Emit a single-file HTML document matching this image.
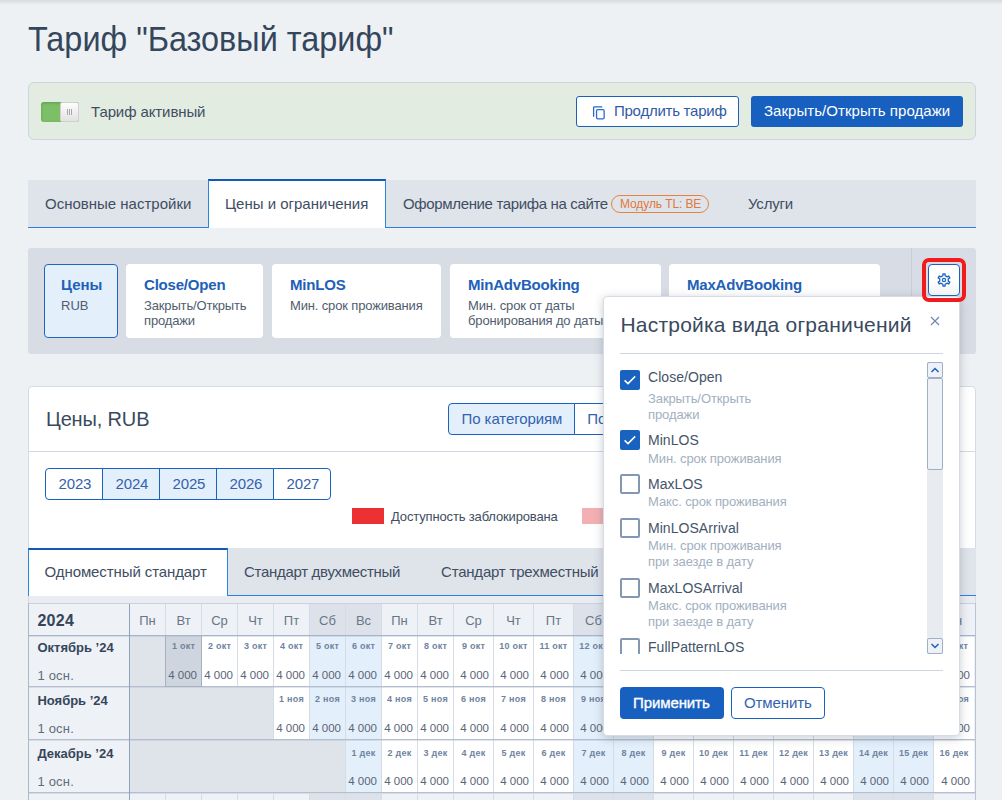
<!DOCTYPE html><html><head><meta charset="utf-8"><style>
*{box-sizing:border-box;margin:0;padding:0}
html,body{width:1002px;height:800px;overflow:hidden}
body{background:#eef1f4;font-family:"Liberation Sans",sans-serif;color:#3d4b5c;position:relative}
.a{position:absolute;white-space:nowrap}
svg{display:block}
</style></head><body><div class="a " style="left:0;top:0;width:1002px;height:5px;background:linear-gradient(#d8dbde,rgba(238,241,244,0))"></div>
<div class="a" style="left:28px;top:17.47px;font-size:35px;line-height:44px;color:#34465c;font-weight:normal;letter-spacing:0px;transform:scaleX(0.926);transform-origin:0 0">Тариф "Базовый тариф"</div>
<div class="a " style="left:28px;top:82px;width:948px;height:58px;background:#e3ece0;border:1px solid #ccd4e2;border-radius:6px"></div>
<div class="a " style="left:41px;top:102px;width:38px;height:20px;border-radius:3px;background:#7dbf66;box-shadow:inset 0 1px 3px rgba(40,90,30,.35)"></div>
<div class="a " style="left:60px;top:102px;width:19px;height:20px;border-radius:2px;background:linear-gradient(#fdfdfd,#e2e2e2);border:1px solid #d0d0d0"><div style="position:absolute;left:6px;top:6px;width:1px;height:6px;background:#a9a9a9;box-shadow:2px 0 0 #a9a9a9,4px 0 0 #a9a9a9"></div></div>
<div class="a" style="left:91px;top:102.10px;font-size:15px;line-height:19px;color:#404e62;font-weight:normal;letter-spacing:-0.1px;">Тариф активный</div>
<div class="a " style="left:576px;top:96px;width:163px;height:31px;border:1px solid #1a5fb8;border-radius:3px;background:#fff"></div>
<div class="a " style="left:592px;top:105px;width:14px;height:16px"><svg width="14" height="16" viewBox="0 0 14 16"><path d="M1.6 11.3V2.6Q1.6 1.9 2.3 1.9H9.8" fill="none" stroke="#2a6cc6" stroke-width="1.3" stroke-linecap="round"/><rect x="4.55" y="4.65" width="7.6" height="9.2" rx="1.3" fill="none" stroke="#2a6cc6" stroke-width="1.3"/></svg></div>
<div class="a" style="left:614px;top:101.30px;font-size:15px;line-height:19px;color:#3159a6;font-weight:normal;letter-spacing:-0.25px;">Продлить тариф</div>
<div class="a " style="left:751px;top:96px;width:212px;height:31px;border-radius:3px;background:#1760bf"></div>
<div class="a" style="left:764px;top:101.30px;font-size:15px;line-height:19px;color:#fff;font-weight:normal;letter-spacing:0.05px;">Закрыть/Открыть продажи</div>
<div class="a " style="left:28px;top:180px;width:948px;height:48px;background:#dfe3ea;border-bottom:1px solid #2a80dc"></div>
<div class="a " style="left:208px;top:179px;width:178px;height:49px;background:#fff;border:1px solid #2a85e0;border-top:2px solid #1259b8;border-bottom:none"></div>
<div class="a" style="left:45px;top:194.30px;font-size:15px;line-height:19px;color:#404e62;font-weight:normal;letter-spacing:0px;">Основные настройки</div>
<div class="a" style="left:225px;top:194.30px;font-size:15px;line-height:19px;color:#404e62;font-weight:normal;letter-spacing:0px;">Цены и ограничения</div>
<div class="a" style="left:403px;top:194.30px;font-size:15px;line-height:19px;color:#404e62;font-weight:normal;letter-spacing:-0.35px;">Оформление тарифа на сайте</div>
<div class="a " style="left:611px;top:195px;width:98px;height:18px;border:1px solid #e2843f;border-radius:9px"></div>
<div class="a" style="left:620px;top:196.94px;font-size:12px;line-height:15px;color:#e2783a;font-weight:normal;letter-spacing:-0.1px;">Модуль TL: BE</div>
<div class="a" style="left:748px;top:194.30px;font-size:15px;line-height:19px;color:#404e62;font-weight:normal;letter-spacing:-0.2px;">Услуги</div>
<div class="a " style="left:28px;top:248px;width:948px;height:106px;background:#d8dde5;border-radius:3px"></div>
<div class="a " style="left:44px;top:264px;width:74px;height:74px;background:#e3f0fc;border:1px solid #2165c0;border-radius:4px"></div>
<div class="a" style="left:61px;top:275.30px;font-size:15px;line-height:19px;color:#2160b8;font-weight:bold;letter-spacing:0px;">Цены</div>
<div class="a" style="left:61px;top:297.80px;font-size:13px;line-height:16px;color:#4f5d6e;font-weight:normal;letter-spacing:0px;">RUB</div>
<div class="a " style="left:126px;top:264px;width:137px;height:74px;background:#fff;border-radius:4px"></div>
<div class="a" style="left:144px;top:275.30px;font-size:15px;line-height:19px;color:#2160b8;font-weight:bold;letter-spacing:-0.2px;">Close/Open</div>
<div class="a" style="left:144px;top:297.80px;font-size:13px;line-height:16px;color:#4f5d6e;font-weight:normal;letter-spacing:-0.15px;">Закрыть/Открыть</div>
<div class="a" style="left:144px;top:313.30px;font-size:13px;line-height:16px;color:#4f5d6e;font-weight:normal;letter-spacing:-0.15px;">продажи</div>
<div class="a " style="left:272px;top:264px;width:169px;height:74px;background:#fff;border-radius:4px"></div>
<div class="a" style="left:290px;top:275.30px;font-size:15px;line-height:19px;color:#2160b8;font-weight:bold;letter-spacing:-0.2px;">MinLOS</div>
<div class="a" style="left:290px;top:297.80px;font-size:13px;line-height:16px;color:#4f5d6e;font-weight:normal;letter-spacing:-0.15px;">Мин. срок проживания</div>
<div class="a " style="left:450px;top:264px;width:211px;height:74px;background:#fff;border-radius:4px"></div>
<div class="a" style="left:468px;top:275.30px;font-size:15px;line-height:19px;color:#2160b8;font-weight:bold;letter-spacing:-0.2px;">MinAdvBooking</div>
<div class="a" style="left:468px;top:297.80px;font-size:13px;line-height:16px;color:#4f5d6e;font-weight:normal;letter-spacing:-0.15px;">Мин. срок от даты</div>
<div class="a" style="left:468px;top:313.30px;font-size:13px;line-height:16px;color:#4f5d6e;font-weight:normal;letter-spacing:-0.15px;">бронирования до даты</div>
<div class="a " style="left:669px;top:264px;width:211px;height:74px;background:#fff;border-radius:4px"></div>
<div class="a" style="left:687px;top:275.30px;font-size:15px;line-height:19px;color:#2160b8;font-weight:bold;letter-spacing:-0.2px;">MaxAdvBooking</div>
<div class="a" style="left:687px;top:297.80px;font-size:13px;line-height:16px;color:#4f5d6e;font-weight:normal;letter-spacing:-0.15px;">Макс. срок от даты</div>
<div class="a" style="left:687px;top:313.30px;font-size:13px;line-height:16px;color:#4f5d6e;font-weight:normal;letter-spacing:-0.15px;">бронирования до даты</div>
<div class="a " style="left:911px;top:248px;width:1px;height:106px;background:#c8ced8"></div>
<div class="a " style="left:28px;top:386px;width:948px;height:420px;background:#fff;border:1px solid #d5dbe3;border-radius:4px"></div>
<div class="a" style="left:46px;top:406.87px;font-size:20px;line-height:25px;color:#3a4a5d;font-weight:normal;letter-spacing:-0.15px;">Цены, RUB</div>
<div class="a " style="left:29px;top:451px;width:946px;height:1px;background:#d2d9e2"></div>
<div class="a " style="left:448px;top:403px;width:127px;height:32px;border:1px solid #1a62c0;border-radius:4px 0 0 4px;background:#e3f0fc"></div>
<div class="a" style="left:461.6px;top:409.30px;font-size:15px;line-height:19px;color:#3462ae;font-weight:normal;letter-spacing:-0.1px;">По категориям</div>
<div class="a " style="left:574px;top:403px;width:140px;height:32px;border:1px solid #1a62c0;border-radius:0 4px 4px 0;background:#fff"></div>
<div class="a" style="left:587.3px;top:409.30px;font-size:15px;line-height:19px;color:#3462ae;font-weight:normal;letter-spacing:-0.1px;">По тарифам</div>
<div class="a " style="left:45px;top:468px;width:58px;height:32px;border:1px solid #1a62c0;background:#fff;border-radius:4px 0 0 4px;"></div>
<div class="a" style="left:58.6px;top:474.30px;font-size:15px;line-height:19px;color:#3462ae;font-weight:normal;letter-spacing:-0.2px;">2023</div>
<div class="a " style="left:102px;top:468px;width:58px;height:32px;border:1px solid #1a62c0;background:#e3f0fc;"></div>
<div class="a" style="left:115.6px;top:474.30px;font-size:15px;line-height:19px;color:#3462ae;font-weight:normal;letter-spacing:-0.2px;">2024</div>
<div class="a " style="left:159px;top:468px;width:58px;height:32px;border:1px solid #1a62c0;background:#e3f0fc;"></div>
<div class="a" style="left:172.6px;top:474.30px;font-size:15px;line-height:19px;color:#3462ae;font-weight:normal;letter-spacing:-0.2px;">2025</div>
<div class="a " style="left:216px;top:468px;width:58px;height:32px;border:1px solid #1a62c0;background:#e3f0fc;"></div>
<div class="a" style="left:229.6px;top:474.30px;font-size:15px;line-height:19px;color:#3462ae;font-weight:normal;letter-spacing:-0.2px;">2026</div>
<div class="a " style="left:273px;top:468px;width:58px;height:32px;border:1px solid #1a62c0;background:#fff;border-radius:0 4px 4px 0;"></div>
<div class="a" style="left:286.6px;top:474.30px;font-size:15px;line-height:19px;color:#3462ae;font-weight:normal;letter-spacing:-0.2px;">2027</div>
<div class="a " style="left:352px;top:508px;width:32px;height:16px;background:#eb3134"></div>
<div class="a" style="left:391px;top:508.50px;font-size:13px;line-height:16px;color:#404e62;font-weight:normal;letter-spacing:-0.15px;">Доступность заблокирована</div>
<div class="a " style="left:582px;top:508px;width:32px;height:16px;background:#f3b0b2"></div>
<div class="a " style="left:28px;top:548px;width:948px;height:48px;background:#dfe3ea;border-bottom:1px solid #2a80dc"></div>
<div class="a " style="left:28px;top:548px;width:200px;height:48px;background:#fff;border:1px solid #2a85e0;border-top:2px solid #1259b8;border-bottom:none"></div>
<div class="a" style="left:44.6px;top:562.30px;font-size:15px;line-height:19px;color:#404e62;font-weight:normal;letter-spacing:-0.1px;">Одноместный стандарт</div>
<div class="a" style="left:244px;top:562.30px;font-size:15px;line-height:19px;color:#404e62;font-weight:normal;letter-spacing:-0.3px;">Стандарт двухместный</div>
<div class="a" style="left:441px;top:562.30px;font-size:15px;line-height:19px;color:#404e62;font-weight:normal;letter-spacing:-0.2px;">Стандарт трехместный</div>
<div class="a " style="left:29px;top:596px;width:946px;height:7px;background:#e9edf1"></div>
<div class="a " style="left:28px;top:603px;width:948px;height:200px;background:#eef1f5"></div>
<div class="a " style="left:28px;top:603px;width:948px;height:1px;background:#c8d1dd"></div>
<div class="a " style="left:28px;top:603px;width:1px;height:200px;background:#a9b8cc"></div>
<div class="a " style="left:310px;top:604px;width:35px;height:31px;background:#dde2ea"></div>
<div class="a " style="left:346px;top:604px;width:35px;height:31px;background:#dde2ea"></div>
<div class="a " style="left:574px;top:604px;width:39px;height:31px;background:#dde2ea"></div>
<div class="a " style="left:614px;top:604px;width:39px;height:31px;background:#dde2ea"></div>
<div class="a " style="left:854px;top:604px;width:39px;height:31px;background:#dde2ea"></div>
<div class="a " style="left:894px;top:604px;width:39px;height:31px;background:#dde2ea"></div>
<div class="a" style="left:37.4px;top:611.46px;font-size:16px;line-height:20px;color:#35465b;font-weight:bold;letter-spacing:0.3px;">2024</div>
<div class="a" style="left:130px;top:612.50px;width:35px;text-align:center;font-size:13px;line-height:16px;color:#687687">Пн</div>
<div class="a" style="left:166px;top:612.50px;width:35px;text-align:center;font-size:13px;line-height:16px;color:#687687">Вт</div>
<div class="a" style="left:202px;top:612.50px;width:35px;text-align:center;font-size:13px;line-height:16px;color:#687687">Ср</div>
<div class="a" style="left:238px;top:612.50px;width:35px;text-align:center;font-size:13px;line-height:16px;color:#687687">Чт</div>
<div class="a" style="left:274px;top:612.50px;width:35px;text-align:center;font-size:13px;line-height:16px;color:#687687">Пт</div>
<div class="a" style="left:310px;top:612.50px;width:35px;text-align:center;font-size:13px;line-height:16px;color:#687687">Сб</div>
<div class="a" style="left:346px;top:612.50px;width:35px;text-align:center;font-size:13px;line-height:16px;color:#687687">Вс</div>
<div class="a" style="left:382px;top:612.50px;width:35px;text-align:center;font-size:13px;line-height:16px;color:#687687">Пн</div>
<div class="a" style="left:418px;top:612.50px;width:35px;text-align:center;font-size:13px;line-height:16px;color:#687687">Вт</div>
<div class="a" style="left:454px;top:612.50px;width:39px;text-align:center;font-size:13px;line-height:16px;color:#687687">Ср</div>
<div class="a" style="left:494px;top:612.50px;width:39px;text-align:center;font-size:13px;line-height:16px;color:#687687">Чт</div>
<div class="a" style="left:534px;top:612.50px;width:39px;text-align:center;font-size:13px;line-height:16px;color:#687687">Пт</div>
<div class="a" style="left:574px;top:612.50px;width:39px;text-align:center;font-size:13px;line-height:16px;color:#687687">Сб</div>
<div class="a" style="left:614px;top:612.50px;width:39px;text-align:center;font-size:13px;line-height:16px;color:#687687">Вс</div>
<div class="a" style="left:654px;top:612.50px;width:39px;text-align:center;font-size:13px;line-height:16px;color:#687687">Пн</div>
<div class="a" style="left:694px;top:612.50px;width:39px;text-align:center;font-size:13px;line-height:16px;color:#687687">Вт</div>
<div class="a" style="left:734px;top:612.50px;width:39px;text-align:center;font-size:13px;line-height:16px;color:#687687">Ср</div>
<div class="a" style="left:774px;top:612.50px;width:39px;text-align:center;font-size:13px;line-height:16px;color:#687687">Чт</div>
<div class="a" style="left:814px;top:612.50px;width:39px;text-align:center;font-size:13px;line-height:16px;color:#687687">Пт</div>
<div class="a" style="left:854px;top:612.50px;width:39px;text-align:center;font-size:13px;line-height:16px;color:#687687">Сб</div>
<div class="a" style="left:894px;top:612.50px;width:39px;text-align:center;font-size:13px;line-height:16px;color:#687687">Вс</div>
<div class="a" style="left:934px;top:612.50px;width:40px;text-align:center;font-size:13px;line-height:16px;color:#687687">Пн</div>
<div class="a " style="left:129px;top:636px;width:37px;height:50px;background:#dfe3ea"></div>
<div class="a " style="left:166px;top:636px;width:35px;height:50px;background:#cfd5de"></div>
<div class="a" style="left:166px;top:640.28px;width:35px;text-align:center;font-size:9px;line-height:12px;font-weight:bold;color:#6f83a1;letter-spacing:0.25px">1 окт</div>
<div class="a" style="left:166px;top:667.82px;width:31px;text-align:right;font-size:11.5px;line-height:15px;color:#5a6577">4 000</div>
<div class="a " style="left:202px;top:636px;width:35px;height:50px;background:#fff"></div>
<div class="a" style="left:202px;top:640.28px;width:35px;text-align:center;font-size:9px;line-height:12px;font-weight:bold;color:#6f83a1;letter-spacing:0.25px">2 окт</div>
<div class="a" style="left:202px;top:667.82px;width:31px;text-align:right;font-size:11.5px;line-height:15px;color:#5a6577">4 000</div>
<div class="a " style="left:238px;top:636px;width:35px;height:50px;background:#fff"></div>
<div class="a" style="left:238px;top:640.28px;width:35px;text-align:center;font-size:9px;line-height:12px;font-weight:bold;color:#6f83a1;letter-spacing:0.25px">3 окт</div>
<div class="a" style="left:238px;top:667.82px;width:31px;text-align:right;font-size:11.5px;line-height:15px;color:#5a6577">4 000</div>
<div class="a " style="left:274px;top:636px;width:35px;height:50px;background:#fff"></div>
<div class="a" style="left:274px;top:640.28px;width:35px;text-align:center;font-size:9px;line-height:12px;font-weight:bold;color:#6f83a1;letter-spacing:0.25px">4 окт</div>
<div class="a" style="left:274px;top:667.82px;width:31px;text-align:right;font-size:11.5px;line-height:15px;color:#5a6577">4 000</div>
<div class="a " style="left:310px;top:636px;width:35px;height:50px;background:#e3effa"></div>
<div class="a" style="left:310px;top:640.28px;width:35px;text-align:center;font-size:9px;line-height:12px;font-weight:bold;color:#6f83a1;letter-spacing:0.25px">5 окт</div>
<div class="a" style="left:310px;top:667.82px;width:31px;text-align:right;font-size:11.5px;line-height:15px;color:#5a6577">4 000</div>
<div class="a " style="left:346px;top:636px;width:35px;height:50px;background:#e3effa"></div>
<div class="a" style="left:346px;top:640.28px;width:35px;text-align:center;font-size:9px;line-height:12px;font-weight:bold;color:#6f83a1;letter-spacing:0.25px">6 окт</div>
<div class="a" style="left:346px;top:667.82px;width:31px;text-align:right;font-size:11.5px;line-height:15px;color:#5a6577">4 000</div>
<div class="a " style="left:382px;top:636px;width:35px;height:50px;background:#fff"></div>
<div class="a" style="left:382px;top:640.28px;width:35px;text-align:center;font-size:9px;line-height:12px;font-weight:bold;color:#6f83a1;letter-spacing:0.25px">7 окт</div>
<div class="a" style="left:382px;top:667.82px;width:31px;text-align:right;font-size:11.5px;line-height:15px;color:#5a6577">4 000</div>
<div class="a " style="left:418px;top:636px;width:35px;height:50px;background:#fff"></div>
<div class="a" style="left:418px;top:640.28px;width:35px;text-align:center;font-size:9px;line-height:12px;font-weight:bold;color:#6f83a1;letter-spacing:0.25px">8 окт</div>
<div class="a" style="left:418px;top:667.82px;width:31px;text-align:right;font-size:11.5px;line-height:15px;color:#5a6577">4 000</div>
<div class="a " style="left:454px;top:636px;width:39px;height:50px;background:#fff"></div>
<div class="a" style="left:454px;top:640.28px;width:39px;text-align:center;font-size:9px;line-height:12px;font-weight:bold;color:#6f83a1;letter-spacing:0.25px">9 окт</div>
<div class="a" style="left:454px;top:667.82px;width:35px;text-align:right;font-size:11.5px;line-height:15px;color:#5a6577">4 000</div>
<div class="a " style="left:494px;top:636px;width:39px;height:50px;background:#fff"></div>
<div class="a" style="left:494px;top:640.28px;width:39px;text-align:center;font-size:9px;line-height:12px;font-weight:bold;color:#6f83a1;letter-spacing:0.25px">10 окт</div>
<div class="a" style="left:494px;top:667.82px;width:35px;text-align:right;font-size:11.5px;line-height:15px;color:#5a6577">4 000</div>
<div class="a " style="left:534px;top:636px;width:39px;height:50px;background:#fff"></div>
<div class="a" style="left:534px;top:640.28px;width:39px;text-align:center;font-size:9px;line-height:12px;font-weight:bold;color:#6f83a1;letter-spacing:0.25px">11 окт</div>
<div class="a" style="left:534px;top:667.82px;width:35px;text-align:right;font-size:11.5px;line-height:15px;color:#5a6577">4 000</div>
<div class="a " style="left:574px;top:636px;width:39px;height:50px;background:#e3effa"></div>
<div class="a" style="left:574px;top:640.28px;width:39px;text-align:center;font-size:9px;line-height:12px;font-weight:bold;color:#6f83a1;letter-spacing:0.25px">12 окт</div>
<div class="a" style="left:574px;top:667.82px;width:35px;text-align:right;font-size:11.5px;line-height:15px;color:#5a6577">4 000</div>
<div class="a " style="left:614px;top:636px;width:39px;height:50px;background:#e3effa"></div>
<div class="a" style="left:614px;top:640.28px;width:39px;text-align:center;font-size:9px;line-height:12px;font-weight:bold;color:#6f83a1;letter-spacing:0.25px">13 окт</div>
<div class="a" style="left:614px;top:667.82px;width:35px;text-align:right;font-size:11.5px;line-height:15px;color:#5a6577">4 000</div>
<div class="a " style="left:654px;top:636px;width:39px;height:50px;background:#fff"></div>
<div class="a" style="left:654px;top:640.28px;width:39px;text-align:center;font-size:9px;line-height:12px;font-weight:bold;color:#6f83a1;letter-spacing:0.25px">14 окт</div>
<div class="a" style="left:654px;top:667.82px;width:35px;text-align:right;font-size:11.5px;line-height:15px;color:#5a6577">4 000</div>
<div class="a " style="left:694px;top:636px;width:39px;height:50px;background:#fff"></div>
<div class="a" style="left:694px;top:640.28px;width:39px;text-align:center;font-size:9px;line-height:12px;font-weight:bold;color:#6f83a1;letter-spacing:0.25px">15 окт</div>
<div class="a" style="left:694px;top:667.82px;width:35px;text-align:right;font-size:11.5px;line-height:15px;color:#5a6577">4 000</div>
<div class="a " style="left:734px;top:636px;width:39px;height:50px;background:#fff"></div>
<div class="a" style="left:734px;top:640.28px;width:39px;text-align:center;font-size:9px;line-height:12px;font-weight:bold;color:#6f83a1;letter-spacing:0.25px">16 окт</div>
<div class="a" style="left:734px;top:667.82px;width:35px;text-align:right;font-size:11.5px;line-height:15px;color:#5a6577">4 000</div>
<div class="a " style="left:774px;top:636px;width:39px;height:50px;background:#fff"></div>
<div class="a" style="left:774px;top:640.28px;width:39px;text-align:center;font-size:9px;line-height:12px;font-weight:bold;color:#6f83a1;letter-spacing:0.25px">17 окт</div>
<div class="a" style="left:774px;top:667.82px;width:35px;text-align:right;font-size:11.5px;line-height:15px;color:#5a6577">4 000</div>
<div class="a " style="left:814px;top:636px;width:39px;height:50px;background:#fff"></div>
<div class="a" style="left:814px;top:640.28px;width:39px;text-align:center;font-size:9px;line-height:12px;font-weight:bold;color:#6f83a1;letter-spacing:0.25px">18 окт</div>
<div class="a" style="left:814px;top:667.82px;width:35px;text-align:right;font-size:11.5px;line-height:15px;color:#5a6577">4 000</div>
<div class="a " style="left:854px;top:636px;width:39px;height:50px;background:#e3effa"></div>
<div class="a" style="left:854px;top:640.28px;width:39px;text-align:center;font-size:9px;line-height:12px;font-weight:bold;color:#6f83a1;letter-spacing:0.25px">19 окт</div>
<div class="a" style="left:854px;top:667.82px;width:35px;text-align:right;font-size:11.5px;line-height:15px;color:#5a6577">4 000</div>
<div class="a " style="left:894px;top:636px;width:39px;height:50px;background:#e3effa"></div>
<div class="a" style="left:894px;top:640.28px;width:39px;text-align:center;font-size:9px;line-height:12px;font-weight:bold;color:#6f83a1;letter-spacing:0.25px">20 окт</div>
<div class="a" style="left:894px;top:667.82px;width:35px;text-align:right;font-size:11.5px;line-height:15px;color:#5a6577">4 000</div>
<div class="a " style="left:934px;top:636px;width:40px;height:50px;background:#fff"></div>
<div class="a" style="left:934px;top:640.28px;width:40px;text-align:center;font-size:9px;line-height:12px;font-weight:bold;color:#6f83a1;letter-spacing:0.25px">21 окт</div>
<div class="a" style="left:934px;top:667.82px;width:36px;text-align:right;font-size:11.5px;line-height:15px;color:#5a6577">4 000</div>
<div class="a" style="left:37.4px;top:639.50px;font-size:13px;line-height:16px;color:#35465b;font-weight:bold;letter-spacing:0px;">Октябрь ’24</div>
<div class="a" style="left:37.4px;top:667.70px;font-size:13px;line-height:16px;color:#5f6d7e;font-weight:normal;letter-spacing:0.2px;">1 осн.</div>
<div class="a " style="left:129px;top:687px;width:37px;height:52px;background:#dfe3ea"></div>
<div class="a " style="left:165px;top:687px;width:37px;height:52px;background:#dfe3ea"></div>
<div class="a " style="left:201px;top:687px;width:37px;height:52px;background:#dfe3ea"></div>
<div class="a " style="left:237px;top:687px;width:37px;height:52px;background:#dfe3ea"></div>
<div class="a " style="left:274px;top:687px;width:35px;height:52px;background:#fff"></div>
<div class="a" style="left:274px;top:693.48px;width:35px;text-align:center;font-size:9px;line-height:12px;font-weight:bold;color:#6f83a1;letter-spacing:0.25px">1 ноя</div>
<div class="a" style="left:274px;top:720.82px;width:31px;text-align:right;font-size:11.5px;line-height:15px;color:#5a6577">4 000</div>
<div class="a " style="left:310px;top:687px;width:35px;height:52px;background:#e3effa"></div>
<div class="a" style="left:310px;top:693.48px;width:35px;text-align:center;font-size:9px;line-height:12px;font-weight:bold;color:#6f83a1;letter-spacing:0.25px">2 ноя</div>
<div class="a" style="left:310px;top:720.82px;width:31px;text-align:right;font-size:11.5px;line-height:15px;color:#5a6577">4 000</div>
<div class="a " style="left:346px;top:687px;width:35px;height:52px;background:#e3effa"></div>
<div class="a" style="left:346px;top:693.48px;width:35px;text-align:center;font-size:9px;line-height:12px;font-weight:bold;color:#6f83a1;letter-spacing:0.25px">3 ноя</div>
<div class="a" style="left:346px;top:720.82px;width:31px;text-align:right;font-size:11.5px;line-height:15px;color:#5a6577">4 000</div>
<div class="a " style="left:382px;top:687px;width:35px;height:52px;background:#fff"></div>
<div class="a" style="left:382px;top:693.48px;width:35px;text-align:center;font-size:9px;line-height:12px;font-weight:bold;color:#6f83a1;letter-spacing:0.25px">4 ноя</div>
<div class="a" style="left:382px;top:720.82px;width:31px;text-align:right;font-size:11.5px;line-height:15px;color:#5a6577">4 000</div>
<div class="a " style="left:418px;top:687px;width:35px;height:52px;background:#fff"></div>
<div class="a" style="left:418px;top:693.48px;width:35px;text-align:center;font-size:9px;line-height:12px;font-weight:bold;color:#6f83a1;letter-spacing:0.25px">5 ноя</div>
<div class="a" style="left:418px;top:720.82px;width:31px;text-align:right;font-size:11.5px;line-height:15px;color:#5a6577">4 000</div>
<div class="a " style="left:454px;top:687px;width:39px;height:52px;background:#fff"></div>
<div class="a" style="left:454px;top:693.48px;width:39px;text-align:center;font-size:9px;line-height:12px;font-weight:bold;color:#6f83a1;letter-spacing:0.25px">6 ноя</div>
<div class="a" style="left:454px;top:720.82px;width:35px;text-align:right;font-size:11.5px;line-height:15px;color:#5a6577">4 000</div>
<div class="a " style="left:494px;top:687px;width:39px;height:52px;background:#fff"></div>
<div class="a" style="left:494px;top:693.48px;width:39px;text-align:center;font-size:9px;line-height:12px;font-weight:bold;color:#6f83a1;letter-spacing:0.25px">7 ноя</div>
<div class="a" style="left:494px;top:720.82px;width:35px;text-align:right;font-size:11.5px;line-height:15px;color:#5a6577">4 000</div>
<div class="a " style="left:534px;top:687px;width:39px;height:52px;background:#fff"></div>
<div class="a" style="left:534px;top:693.48px;width:39px;text-align:center;font-size:9px;line-height:12px;font-weight:bold;color:#6f83a1;letter-spacing:0.25px">8 ноя</div>
<div class="a" style="left:534px;top:720.82px;width:35px;text-align:right;font-size:11.5px;line-height:15px;color:#5a6577">4 000</div>
<div class="a " style="left:574px;top:687px;width:39px;height:52px;background:#e3effa"></div>
<div class="a" style="left:574px;top:693.48px;width:39px;text-align:center;font-size:9px;line-height:12px;font-weight:bold;color:#6f83a1;letter-spacing:0.25px">9 ноя</div>
<div class="a" style="left:574px;top:720.82px;width:35px;text-align:right;font-size:11.5px;line-height:15px;color:#5a6577">4 000</div>
<div class="a " style="left:614px;top:687px;width:39px;height:52px;background:#e3effa"></div>
<div class="a" style="left:614px;top:693.48px;width:39px;text-align:center;font-size:9px;line-height:12px;font-weight:bold;color:#6f83a1;letter-spacing:0.25px">10 ноя</div>
<div class="a" style="left:614px;top:720.82px;width:35px;text-align:right;font-size:11.5px;line-height:15px;color:#5a6577">4 000</div>
<div class="a " style="left:654px;top:687px;width:39px;height:52px;background:#fff"></div>
<div class="a" style="left:654px;top:693.48px;width:39px;text-align:center;font-size:9px;line-height:12px;font-weight:bold;color:#6f83a1;letter-spacing:0.25px">11 ноя</div>
<div class="a" style="left:654px;top:720.82px;width:35px;text-align:right;font-size:11.5px;line-height:15px;color:#5a6577">4 000</div>
<div class="a " style="left:694px;top:687px;width:39px;height:52px;background:#fff"></div>
<div class="a" style="left:694px;top:693.48px;width:39px;text-align:center;font-size:9px;line-height:12px;font-weight:bold;color:#6f83a1;letter-spacing:0.25px">12 ноя</div>
<div class="a" style="left:694px;top:720.82px;width:35px;text-align:right;font-size:11.5px;line-height:15px;color:#5a6577">4 000</div>
<div class="a " style="left:734px;top:687px;width:39px;height:52px;background:#fff"></div>
<div class="a" style="left:734px;top:693.48px;width:39px;text-align:center;font-size:9px;line-height:12px;font-weight:bold;color:#6f83a1;letter-spacing:0.25px">13 ноя</div>
<div class="a" style="left:734px;top:720.82px;width:35px;text-align:right;font-size:11.5px;line-height:15px;color:#5a6577">4 000</div>
<div class="a " style="left:774px;top:687px;width:39px;height:52px;background:#fff"></div>
<div class="a" style="left:774px;top:693.48px;width:39px;text-align:center;font-size:9px;line-height:12px;font-weight:bold;color:#6f83a1;letter-spacing:0.25px">14 ноя</div>
<div class="a" style="left:774px;top:720.82px;width:35px;text-align:right;font-size:11.5px;line-height:15px;color:#5a6577">4 000</div>
<div class="a " style="left:814px;top:687px;width:39px;height:52px;background:#fff"></div>
<div class="a" style="left:814px;top:693.48px;width:39px;text-align:center;font-size:9px;line-height:12px;font-weight:bold;color:#6f83a1;letter-spacing:0.25px">15 ноя</div>
<div class="a" style="left:814px;top:720.82px;width:35px;text-align:right;font-size:11.5px;line-height:15px;color:#5a6577">4 000</div>
<div class="a " style="left:854px;top:687px;width:39px;height:52px;background:#e3effa"></div>
<div class="a" style="left:854px;top:693.48px;width:39px;text-align:center;font-size:9px;line-height:12px;font-weight:bold;color:#6f83a1;letter-spacing:0.25px">16 ноя</div>
<div class="a" style="left:854px;top:720.82px;width:35px;text-align:right;font-size:11.5px;line-height:15px;color:#5a6577">4 000</div>
<div class="a " style="left:894px;top:687px;width:39px;height:52px;background:#e3effa"></div>
<div class="a" style="left:894px;top:693.48px;width:39px;text-align:center;font-size:9px;line-height:12px;font-weight:bold;color:#6f83a1;letter-spacing:0.25px">17 ноя</div>
<div class="a" style="left:894px;top:720.82px;width:35px;text-align:right;font-size:11.5px;line-height:15px;color:#5a6577">4 000</div>
<div class="a " style="left:934px;top:687px;width:40px;height:52px;background:#fff"></div>
<div class="a" style="left:934px;top:693.48px;width:40px;text-align:center;font-size:9px;line-height:12px;font-weight:bold;color:#6f83a1;letter-spacing:0.25px">18 ноя</div>
<div class="a" style="left:934px;top:720.82px;width:36px;text-align:right;font-size:11.5px;line-height:15px;color:#5a6577">4 000</div>
<div class="a" style="left:37.4px;top:692.80px;font-size:13px;line-height:16px;color:#35465b;font-weight:bold;letter-spacing:0px;">Ноябрь ’24</div>
<div class="a" style="left:37.4px;top:720.50px;font-size:13px;line-height:16px;color:#5f6d7e;font-weight:normal;letter-spacing:0.2px;">1 осн.</div>
<div class="a " style="left:129px;top:740px;width:37px;height:52px;background:#dfe3ea"></div>
<div class="a " style="left:165px;top:740px;width:37px;height:52px;background:#dfe3ea"></div>
<div class="a " style="left:201px;top:740px;width:37px;height:52px;background:#dfe3ea"></div>
<div class="a " style="left:237px;top:740px;width:37px;height:52px;background:#dfe3ea"></div>
<div class="a " style="left:273px;top:740px;width:37px;height:52px;background:#dfe3ea"></div>
<div class="a " style="left:309px;top:740px;width:37px;height:52px;background:#dfe3ea"></div>
<div class="a " style="left:346px;top:740px;width:35px;height:52px;background:#e3effa"></div>
<div class="a" style="left:346px;top:746.68px;width:35px;text-align:center;font-size:9px;line-height:12px;font-weight:bold;color:#6f83a1;letter-spacing:0.25px">1 дек</div>
<div class="a" style="left:346px;top:773.82px;width:31px;text-align:right;font-size:11.5px;line-height:15px;color:#5a6577">4 000</div>
<div class="a " style="left:382px;top:740px;width:35px;height:52px;background:#fff"></div>
<div class="a" style="left:382px;top:746.68px;width:35px;text-align:center;font-size:9px;line-height:12px;font-weight:bold;color:#6f83a1;letter-spacing:0.25px">2 дек</div>
<div class="a" style="left:382px;top:773.82px;width:31px;text-align:right;font-size:11.5px;line-height:15px;color:#5a6577">4 000</div>
<div class="a " style="left:418px;top:740px;width:35px;height:52px;background:#fff"></div>
<div class="a" style="left:418px;top:746.68px;width:35px;text-align:center;font-size:9px;line-height:12px;font-weight:bold;color:#6f83a1;letter-spacing:0.25px">3 дек</div>
<div class="a" style="left:418px;top:773.82px;width:31px;text-align:right;font-size:11.5px;line-height:15px;color:#5a6577">4 000</div>
<div class="a " style="left:454px;top:740px;width:39px;height:52px;background:#fff"></div>
<div class="a" style="left:454px;top:746.68px;width:39px;text-align:center;font-size:9px;line-height:12px;font-weight:bold;color:#6f83a1;letter-spacing:0.25px">4 дек</div>
<div class="a" style="left:454px;top:773.82px;width:35px;text-align:right;font-size:11.5px;line-height:15px;color:#5a6577">4 000</div>
<div class="a " style="left:494px;top:740px;width:39px;height:52px;background:#fff"></div>
<div class="a" style="left:494px;top:746.68px;width:39px;text-align:center;font-size:9px;line-height:12px;font-weight:bold;color:#6f83a1;letter-spacing:0.25px">5 дек</div>
<div class="a" style="left:494px;top:773.82px;width:35px;text-align:right;font-size:11.5px;line-height:15px;color:#5a6577">4 000</div>
<div class="a " style="left:534px;top:740px;width:39px;height:52px;background:#fff"></div>
<div class="a" style="left:534px;top:746.68px;width:39px;text-align:center;font-size:9px;line-height:12px;font-weight:bold;color:#6f83a1;letter-spacing:0.25px">6 дек</div>
<div class="a" style="left:534px;top:773.82px;width:35px;text-align:right;font-size:11.5px;line-height:15px;color:#5a6577">4 000</div>
<div class="a " style="left:574px;top:740px;width:39px;height:52px;background:#e3effa"></div>
<div class="a" style="left:574px;top:746.68px;width:39px;text-align:center;font-size:9px;line-height:12px;font-weight:bold;color:#6f83a1;letter-spacing:0.25px">7 дек</div>
<div class="a" style="left:574px;top:773.82px;width:35px;text-align:right;font-size:11.5px;line-height:15px;color:#5a6577">4 000</div>
<div class="a " style="left:614px;top:740px;width:39px;height:52px;background:#e3effa"></div>
<div class="a" style="left:614px;top:746.68px;width:39px;text-align:center;font-size:9px;line-height:12px;font-weight:bold;color:#6f83a1;letter-spacing:0.25px">8 дек</div>
<div class="a" style="left:614px;top:773.82px;width:35px;text-align:right;font-size:11.5px;line-height:15px;color:#5a6577">4 000</div>
<div class="a " style="left:654px;top:740px;width:39px;height:52px;background:#fff"></div>
<div class="a" style="left:654px;top:746.68px;width:39px;text-align:center;font-size:9px;line-height:12px;font-weight:bold;color:#6f83a1;letter-spacing:0.25px">9 дек</div>
<div class="a" style="left:654px;top:773.82px;width:35px;text-align:right;font-size:11.5px;line-height:15px;color:#5a6577">4 000</div>
<div class="a " style="left:694px;top:740px;width:39px;height:52px;background:#fff"></div>
<div class="a" style="left:694px;top:746.68px;width:39px;text-align:center;font-size:9px;line-height:12px;font-weight:bold;color:#6f83a1;letter-spacing:0.25px">10 дек</div>
<div class="a" style="left:694px;top:773.82px;width:35px;text-align:right;font-size:11.5px;line-height:15px;color:#5a6577">4 000</div>
<div class="a " style="left:734px;top:740px;width:39px;height:52px;background:#fff"></div>
<div class="a" style="left:734px;top:746.68px;width:39px;text-align:center;font-size:9px;line-height:12px;font-weight:bold;color:#6f83a1;letter-spacing:0.25px">11 дек</div>
<div class="a" style="left:734px;top:773.82px;width:35px;text-align:right;font-size:11.5px;line-height:15px;color:#5a6577">4 000</div>
<div class="a " style="left:774px;top:740px;width:39px;height:52px;background:#fff"></div>
<div class="a" style="left:774px;top:746.68px;width:39px;text-align:center;font-size:9px;line-height:12px;font-weight:bold;color:#6f83a1;letter-spacing:0.25px">12 дек</div>
<div class="a" style="left:774px;top:773.82px;width:35px;text-align:right;font-size:11.5px;line-height:15px;color:#5a6577">4 000</div>
<div class="a " style="left:814px;top:740px;width:39px;height:52px;background:#fff"></div>
<div class="a" style="left:814px;top:746.68px;width:39px;text-align:center;font-size:9px;line-height:12px;font-weight:bold;color:#6f83a1;letter-spacing:0.25px">13 дек</div>
<div class="a" style="left:814px;top:773.82px;width:35px;text-align:right;font-size:11.5px;line-height:15px;color:#5a6577">4 000</div>
<div class="a " style="left:854px;top:740px;width:39px;height:52px;background:#e3effa"></div>
<div class="a" style="left:854px;top:746.68px;width:39px;text-align:center;font-size:9px;line-height:12px;font-weight:bold;color:#6f83a1;letter-spacing:0.25px">14 дек</div>
<div class="a" style="left:854px;top:773.82px;width:35px;text-align:right;font-size:11.5px;line-height:15px;color:#5a6577">4 000</div>
<div class="a " style="left:894px;top:740px;width:39px;height:52px;background:#e3effa"></div>
<div class="a" style="left:894px;top:746.68px;width:39px;text-align:center;font-size:9px;line-height:12px;font-weight:bold;color:#6f83a1;letter-spacing:0.25px">15 дек</div>
<div class="a" style="left:894px;top:773.82px;width:35px;text-align:right;font-size:11.5px;line-height:15px;color:#5a6577">4 000</div>
<div class="a " style="left:934px;top:740px;width:40px;height:52px;background:#fff"></div>
<div class="a" style="left:934px;top:746.68px;width:40px;text-align:center;font-size:9px;line-height:12px;font-weight:bold;color:#6f83a1;letter-spacing:0.25px">16 дек</div>
<div class="a" style="left:934px;top:773.82px;width:36px;text-align:right;font-size:11.5px;line-height:15px;color:#5a6577">4 000</div>
<div class="a" style="left:37.4px;top:746.00px;font-size:13px;line-height:16px;color:#35465b;font-weight:bold;letter-spacing:0px;">Декабрь ’24</div>
<div class="a" style="left:37.4px;top:773.50px;font-size:13px;line-height:16px;color:#5f6d7e;font-weight:normal;letter-spacing:0.2px;">1 осн.</div>
<div class="a " style="left:165px;top:604px;width:1px;height:31px;background:#d6dce6"></div>
<div class="a " style="left:201px;top:604px;width:1px;height:31px;background:#d6dce6"></div>
<div class="a " style="left:237px;top:604px;width:1px;height:31px;background:#d6dce6"></div>
<div class="a " style="left:273px;top:604px;width:1px;height:31px;background:#d6dce6"></div>
<div class="a " style="left:309px;top:604px;width:1px;height:31px;background:#d6dce6"></div>
<div class="a " style="left:345px;top:604px;width:1px;height:31px;background:#d6dce6"></div>
<div class="a " style="left:381px;top:604px;width:1px;height:31px;background:#d6dce6"></div>
<div class="a " style="left:417px;top:604px;width:1px;height:31px;background:#d6dce6"></div>
<div class="a " style="left:453px;top:604px;width:1px;height:31px;background:#d6dce6"></div>
<div class="a " style="left:493px;top:604px;width:1px;height:31px;background:#d6dce6"></div>
<div class="a " style="left:533px;top:604px;width:1px;height:31px;background:#d6dce6"></div>
<div class="a " style="left:573px;top:604px;width:1px;height:31px;background:#d6dce6"></div>
<div class="a " style="left:613px;top:604px;width:1px;height:31px;background:#d6dce6"></div>
<div class="a " style="left:653px;top:604px;width:1px;height:31px;background:#d6dce6"></div>
<div class="a " style="left:693px;top:604px;width:1px;height:31px;background:#d6dce6"></div>
<div class="a " style="left:733px;top:604px;width:1px;height:31px;background:#d6dce6"></div>
<div class="a " style="left:773px;top:604px;width:1px;height:31px;background:#d6dce6"></div>
<div class="a " style="left:813px;top:604px;width:1px;height:31px;background:#d6dce6"></div>
<div class="a " style="left:853px;top:604px;width:1px;height:31px;background:#d6dce6"></div>
<div class="a " style="left:893px;top:604px;width:1px;height:31px;background:#d6dce6"></div>
<div class="a " style="left:933px;top:604px;width:1px;height:31px;background:#d6dce6"></div>
<div class="a " style="left:165px;top:636px;width:1px;height:50px;background:#d6dce6"></div>
<div class="a " style="left:201px;top:636px;width:1px;height:50px;background:#d6dce6"></div>
<div class="a " style="left:237px;top:636px;width:1px;height:50px;background:#d6dce6"></div>
<div class="a " style="left:273px;top:636px;width:1px;height:50px;background:#d6dce6"></div>
<div class="a " style="left:309px;top:636px;width:1px;height:50px;background:#d6dce6"></div>
<div class="a " style="left:345px;top:636px;width:1px;height:50px;background:#d6dce6"></div>
<div class="a " style="left:381px;top:636px;width:1px;height:50px;background:#d6dce6"></div>
<div class="a " style="left:417px;top:636px;width:1px;height:50px;background:#d6dce6"></div>
<div class="a " style="left:453px;top:636px;width:1px;height:50px;background:#d6dce6"></div>
<div class="a " style="left:493px;top:636px;width:1px;height:50px;background:#d6dce6"></div>
<div class="a " style="left:533px;top:636px;width:1px;height:50px;background:#d6dce6"></div>
<div class="a " style="left:573px;top:636px;width:1px;height:50px;background:#d6dce6"></div>
<div class="a " style="left:613px;top:636px;width:1px;height:50px;background:#d6dce6"></div>
<div class="a " style="left:653px;top:636px;width:1px;height:50px;background:#d6dce6"></div>
<div class="a " style="left:693px;top:636px;width:1px;height:50px;background:#d6dce6"></div>
<div class="a " style="left:733px;top:636px;width:1px;height:50px;background:#d6dce6"></div>
<div class="a " style="left:773px;top:636px;width:1px;height:50px;background:#d6dce6"></div>
<div class="a " style="left:813px;top:636px;width:1px;height:50px;background:#d6dce6"></div>
<div class="a " style="left:853px;top:636px;width:1px;height:50px;background:#d6dce6"></div>
<div class="a " style="left:893px;top:636px;width:1px;height:50px;background:#d6dce6"></div>
<div class="a " style="left:933px;top:636px;width:1px;height:50px;background:#d6dce6"></div>
<div class="a " style="left:273px;top:687px;width:1px;height:52px;background:#d6dce6"></div>
<div class="a " style="left:309px;top:687px;width:1px;height:52px;background:#d6dce6"></div>
<div class="a " style="left:345px;top:687px;width:1px;height:52px;background:#d6dce6"></div>
<div class="a " style="left:381px;top:687px;width:1px;height:52px;background:#d6dce6"></div>
<div class="a " style="left:417px;top:687px;width:1px;height:52px;background:#d6dce6"></div>
<div class="a " style="left:453px;top:687px;width:1px;height:52px;background:#d6dce6"></div>
<div class="a " style="left:493px;top:687px;width:1px;height:52px;background:#d6dce6"></div>
<div class="a " style="left:533px;top:687px;width:1px;height:52px;background:#d6dce6"></div>
<div class="a " style="left:573px;top:687px;width:1px;height:52px;background:#d6dce6"></div>
<div class="a " style="left:613px;top:687px;width:1px;height:52px;background:#d6dce6"></div>
<div class="a " style="left:653px;top:687px;width:1px;height:52px;background:#d6dce6"></div>
<div class="a " style="left:693px;top:687px;width:1px;height:52px;background:#d6dce6"></div>
<div class="a " style="left:733px;top:687px;width:1px;height:52px;background:#d6dce6"></div>
<div class="a " style="left:773px;top:687px;width:1px;height:52px;background:#d6dce6"></div>
<div class="a " style="left:813px;top:687px;width:1px;height:52px;background:#d6dce6"></div>
<div class="a " style="left:853px;top:687px;width:1px;height:52px;background:#d6dce6"></div>
<div class="a " style="left:893px;top:687px;width:1px;height:52px;background:#d6dce6"></div>
<div class="a " style="left:933px;top:687px;width:1px;height:52px;background:#d6dce6"></div>
<div class="a " style="left:345px;top:740px;width:1px;height:52px;background:#d6dce6"></div>
<div class="a " style="left:381px;top:740px;width:1px;height:52px;background:#d6dce6"></div>
<div class="a " style="left:417px;top:740px;width:1px;height:52px;background:#d6dce6"></div>
<div class="a " style="left:453px;top:740px;width:1px;height:52px;background:#d6dce6"></div>
<div class="a " style="left:493px;top:740px;width:1px;height:52px;background:#d6dce6"></div>
<div class="a " style="left:533px;top:740px;width:1px;height:52px;background:#d6dce6"></div>
<div class="a " style="left:573px;top:740px;width:1px;height:52px;background:#d6dce6"></div>
<div class="a " style="left:613px;top:740px;width:1px;height:52px;background:#d6dce6"></div>
<div class="a " style="left:653px;top:740px;width:1px;height:52px;background:#d6dce6"></div>
<div class="a " style="left:693px;top:740px;width:1px;height:52px;background:#d6dce6"></div>
<div class="a " style="left:733px;top:740px;width:1px;height:52px;background:#d6dce6"></div>
<div class="a " style="left:773px;top:740px;width:1px;height:52px;background:#d6dce6"></div>
<div class="a " style="left:813px;top:740px;width:1px;height:52px;background:#d6dce6"></div>
<div class="a " style="left:853px;top:740px;width:1px;height:52px;background:#d6dce6"></div>
<div class="a " style="left:893px;top:740px;width:1px;height:52px;background:#d6dce6"></div>
<div class="a " style="left:933px;top:740px;width:1px;height:52px;background:#d6dce6"></div>
<div class="a " style="left:29px;top:635px;width:946px;height:1px;background:#a6b5c9"></div>
<div class="a " style="left:29px;top:636px;width:946px;height:1px;background:rgba(166,181,201,.35)"></div>
<div class="a " style="left:29px;top:686px;width:946px;height:1px;background:#b3bfcf"></div>
<div class="a " style="left:29px;top:687px;width:946px;height:1px;background:rgba(179,191,207,.4)"></div>
<div class="a " style="left:29px;top:739px;width:946px;height:1px;background:#b3bfcf"></div>
<div class="a " style="left:29px;top:740px;width:946px;height:1px;background:rgba(179,191,207,.4)"></div>
<div class="a " style="left:29px;top:792px;width:946px;height:1px;background:#b3bfcf"></div>
<div class="a " style="left:29px;top:793px;width:946px;height:1px;background:rgba(179,191,207,.4)"></div>
<div class="a " style="left:310px;top:794px;width:35px;height:6px;background:#dde2ea"></div>
<div class="a " style="left:346px;top:794px;width:35px;height:6px;background:#dde2ea"></div>
<div class="a " style="left:574px;top:794px;width:39px;height:6px;background:#dde2ea"></div>
<div class="a " style="left:614px;top:794px;width:39px;height:6px;background:#dde2ea"></div>
<div class="a " style="left:854px;top:794px;width:39px;height:6px;background:#dde2ea"></div>
<div class="a " style="left:894px;top:794px;width:39px;height:6px;background:#dde2ea"></div>
<div class="a " style="left:165px;top:794px;width:1px;height:6px;background:#d6dce6"></div>
<div class="a " style="left:201px;top:794px;width:1px;height:6px;background:#d6dce6"></div>
<div class="a " style="left:237px;top:794px;width:1px;height:6px;background:#d6dce6"></div>
<div class="a " style="left:273px;top:794px;width:1px;height:6px;background:#d6dce6"></div>
<div class="a " style="left:309px;top:794px;width:1px;height:6px;background:#d6dce6"></div>
<div class="a " style="left:345px;top:794px;width:1px;height:6px;background:#d6dce6"></div>
<div class="a " style="left:381px;top:794px;width:1px;height:6px;background:#d6dce6"></div>
<div class="a " style="left:417px;top:794px;width:1px;height:6px;background:#d6dce6"></div>
<div class="a " style="left:453px;top:794px;width:1px;height:6px;background:#d6dce6"></div>
<div class="a " style="left:493px;top:794px;width:1px;height:6px;background:#d6dce6"></div>
<div class="a " style="left:533px;top:794px;width:1px;height:6px;background:#d6dce6"></div>
<div class="a " style="left:573px;top:794px;width:1px;height:6px;background:#d6dce6"></div>
<div class="a " style="left:613px;top:794px;width:1px;height:6px;background:#d6dce6"></div>
<div class="a " style="left:653px;top:794px;width:1px;height:6px;background:#d6dce6"></div>
<div class="a " style="left:693px;top:794px;width:1px;height:6px;background:#d6dce6"></div>
<div class="a " style="left:733px;top:794px;width:1px;height:6px;background:#d6dce6"></div>
<div class="a " style="left:773px;top:794px;width:1px;height:6px;background:#d6dce6"></div>
<div class="a " style="left:813px;top:794px;width:1px;height:6px;background:#d6dce6"></div>
<div class="a " style="left:853px;top:794px;width:1px;height:6px;background:#d6dce6"></div>
<div class="a " style="left:893px;top:794px;width:1px;height:6px;background:#d6dce6"></div>
<div class="a " style="left:933px;top:794px;width:1px;height:6px;background:#d6dce6"></div>
<div class="a " style="left:129px;top:604px;width:1px;height:196px;background:#8ea2bd"></div>
<div class="a " style="left:165px;top:636px;width:37px;height:51px;border:1px solid #a7b1bf;border-top:none"></div>
<div class="a " style="left:975px;top:603px;width:1px;height:197px;background:#b8c4d4"></div>
<div class="a " style="left:603px;top:296px;width:357px;height:440px;background:#fff;border:1px solid #d6dce4;border-radius:4px;box-shadow:0 2px 10px rgba(40,50,70,.25)"></div>
<div class="a" style="left:620.4px;top:311.92px;font-size:21px;line-height:26px;color:#3a4a5e;font-weight:normal;letter-spacing:0.22px;">Настройка вида ограничений</div>
<div class="a " style="left:930px;top:316px;width:10px;height:10px"><svg width="10" height="10" viewBox="0 0 10 10"><path d="M1 1L9 9M9 1L1 9" stroke="#6d88ae" stroke-width="1.2"/></svg></div>
<div class="a " style="left:620px;top:353px;width:323px;height:1px;background:#cdd5df"></div>
<div class="a" style="left:620px;top:362px;width:300px;height:292px;overflow:hidden">
<div class="a" style="left:0;top:8px;width:20px;height:20px;border-radius:2px;background:#1a62c0"><svg width="20" height="20" viewBox="0 0 20 20"><path d="M4.6 10.4l3.4 3.2L15.2 6.4" fill="none" stroke="#fff" stroke-width="1.5"/></svg></div>
<div class="a" style="left:28px;top:5.65px;font-size:14px;line-height:18px;color:#44546a;letter-spacing:0.05px">Close/Open</div>
<div class="a" style="left:28px;top:28.50px;font-size:13px;line-height:16px;color:#a2afc0;letter-spacing:-0.1px">Закрыть/Открыть</div>
<div class="a" style="left:28px;top:44.50px;font-size:13px;line-height:16px;color:#a2afc0;letter-spacing:-0.1px">продажи</div>
<div class="a" style="left:0;top:68px;width:20px;height:20px;border-radius:2px;background:#1a62c0"><svg width="20" height="20" viewBox="0 0 20 20"><path d="M4.6 10.4l3.4 3.2L15.2 6.4" fill="none" stroke="#fff" stroke-width="1.5"/></svg></div>
<div class="a" style="left:28px;top:69.15px;font-size:14px;line-height:18px;color:#44546a;letter-spacing:0.05px">MinLOS</div>
<div class="a" style="left:28px;top:88.50px;font-size:13px;line-height:16px;color:#a2afc0;letter-spacing:-0.1px">Мин. срок проживания</div>
<div class="a" style="left:0;top:112px;width:20px;height:20px;border-radius:2px;border:2px solid #8497b2;background:#fff"></div>
<div class="a" style="left:28px;top:112.95px;font-size:14px;line-height:18px;color:#44546a;letter-spacing:0.05px">MaxLOS</div>
<div class="a" style="left:28px;top:132.00px;font-size:13px;line-height:16px;color:#a2afc0;letter-spacing:-0.1px">Макс. срок проживания</div>
<div class="a" style="left:0;top:156px;width:20px;height:20px;border-radius:2px;border:2px solid #8497b2;background:#fff"></div>
<div class="a" style="left:28px;top:156.95px;font-size:14px;line-height:18px;color:#44546a;letter-spacing:0.05px">MinLOSArrival</div>
<div class="a" style="left:28px;top:176.30px;font-size:13px;line-height:16px;color:#a2afc0;letter-spacing:-0.1px">Мин. срок проживания</div>
<div class="a" style="left:28px;top:192.30px;font-size:13px;line-height:16px;color:#a2afc0;letter-spacing:-0.1px">при заезде в дату</div>
<div class="a" style="left:0;top:216px;width:20px;height:20px;border-radius:2px;border:2px solid #8497b2;background:#fff"></div>
<div class="a" style="left:28px;top:217.15px;font-size:14px;line-height:18px;color:#44546a;letter-spacing:0.05px">MaxLOSArrival</div>
<div class="a" style="left:28px;top:235.90px;font-size:13px;line-height:16px;color:#a2afc0;letter-spacing:-0.1px">Макс. срок проживания</div>
<div class="a" style="left:28px;top:252.10px;font-size:13px;line-height:16px;color:#a2afc0;letter-spacing:-0.1px">при заезде в дату</div>
<div class="a" style="left:0;top:276px;width:20px;height:20px;border-radius:2px;border:2px solid #8497b2;background:#fff"></div>
<div class="a" style="left:28px;top:276.25px;font-size:14px;line-height:18px;color:#44546a;letter-spacing:0.05px">FullPatternLOS</div>
</div>
<div class="a " style="left:927px;top:362px;width:16px;height:292px;background:#e8ecf0"></div>
<div class="a " style="left:927px;top:362px;width:16px;height:16px;background:#eef1f5;border:1px solid #9fb0c6;border-radius:2px"><svg style="position:absolute;left:2px;top:3px" width="10" height="9" viewBox="0 0 10 9"><path d="M1.5 6L5 2.5L8.5 6" fill="none" stroke="#1a62c0" stroke-width="1.5"/></svg></div>
<div class="a " style="left:927px;top:378px;width:16px;height:92px;background:#eef1f5;border:1px solid #9fb0c6;border-radius:2px"></div>
<div class="a " style="left:927px;top:638px;width:16px;height:16px;background:#eef1f5;border:1px solid #9fb0c6;border-radius:2px"><svg style="position:absolute;left:2px;top:2px" width="10" height="9" viewBox="0 0 10 9"><path d="M1.5 3L5 6.5L8.5 3" fill="none" stroke="#1a62c0" stroke-width="1.5"/></svg></div>
<div class="a " style="left:620px;top:670px;width:323px;height:1px;background:#cdd5df"></div>
<div class="a " style="left:620px;top:687px;width:104px;height:32px;border-radius:4px;background:#1760bf"></div>
<div class="a" style="left:633px;top:692.80px;font-size:15px;line-height:19px;color:#fff;font-weight:normal;letter-spacing:-0.1px;-webkit-text-stroke:0.35px #fff">Применить</div>
<div class="a " style="left:731px;top:687px;width:94px;height:32px;border:1px solid #1a62c0;border-radius:4px;background:#fff"></div>
<div class="a" style="left:744px;top:692.80px;font-size:15px;line-height:19px;color:#3462ae;font-weight:normal;letter-spacing:-0.1px;">Отменить</div>
<div class="a " style="left:928px;top:264px;width:32px;height:32px;border:1px solid #1a62c0;border-radius:4px;background:linear-gradient(#fff 55%,#f2f2f2)"><svg style="position:absolute;left:0;top:0" width="30" height="30" viewBox="0 0 30 30"><path d="M13.90 10.74 L13.90 8.90 L16.10 8.90 L16.10 10.74 L18.14 11.92 L19.73 11.00 L20.83 12.90 L19.24 13.82 L19.24 16.18 L20.83 17.10 L19.73 19.00 L18.14 18.08 L16.10 19.26 L16.10 21.10 L13.90 21.10 L13.90 19.26 L11.86 18.08 L10.27 19.00 L9.17 17.10 L10.76 16.18 L10.76 13.82 L9.17 12.90 L10.27 11.00 L11.86 11.92Z" fill="none" stroke="#1a62c0" stroke-width="1.3" stroke-linejoin="round"/><circle cx="15" cy="15" r="1.6" fill="none" stroke="#1a62c0" stroke-width="1.2"/></svg></div>
<div class="a " style="left:922px;top:258px;width:44px;height:44px;border:4px solid #f21b1b;border-radius:7px"></div></body></html>
